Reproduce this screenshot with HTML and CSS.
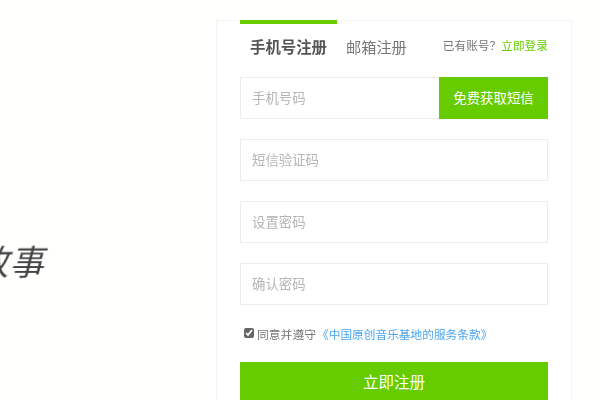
FILE: index.html
```html
<!DOCTYPE html>
<html lang="zh">
<head>
<meta charset="utf-8">
<title>注册</title>
<link rel="stylesheet" href="styles.css">
</head>
<body>
<div class="page">
  <div class="hero"><span class="slogan">故事</span></div>
  <form class="card">
    <div class="tabs">
      <span class="tab tab-active">手机号注册</span>
      <span class="tab">邮箱注册</span>
      <span class="login">已有账号？<a class="login-link">立即登录</a></span>
    </div>
    <div class="field field-code">
      <span class="ph">手机号码</span>
      <span class="send">免费获取短信</span>
    </div>
    <div class="field"><span class="ph">短信验证码</span></div>
    <div class="field"><span class="ph">设置密码</span></div>
    <div class="field"><span class="ph">确认密码</span></div>
    <label class="agree">
      <input class="check" type="checkbox" checked>
      <span>同意并遵守</span>
      <a class="terms">《中国原创音乐基地的服务条款》</a>
    </label>
    <div class="submit">立即注册</div>
  </form>
</div>
</body>
</html>
```

FILE: styles.css
```css
* { box-sizing: border-box; }
html, body { margin: 0; height: 100%; overflow: hidden; background: #fffffd; }
body { font-family: "Noto Sans CJK SC", "Liberation Sans", sans-serif; }
.page { display: flex; width: 600px; height: 400px; padding: 20px 28px 0 0; overflow: hidden; }
.hero { width: 216px; flex: none; padding-top: 216px; overflow: hidden; }
.slogan { display: block; width: 80px; margin-left: -22px; font-size: 34px; line-height: 50px; letter-spacing: 1px; color: #444; font-weight: 400; transform: skewX(-14deg); filter: blur(0.6px); }
.card { flex: 1; height: 400px; padding: 0 23px 0 23px; background: #fff; border: 1px solid #f4f4f4; border-bottom: 0; }
.tabs { position: relative; display: flex; align-items: center; height: 56px; margin-top: -1px; padding-bottom: 9px; }
.tabs::before { content: ""; position: absolute; left: 0; top: 0; width: 97px; height: 4px; background: #66cc00; }
.tab { font-size: 15.2px; color: #777; margin-left: 10px; margin-right: 9px; padding-top: 4px; line-height: 20px; filter: blur(0.4px); }
.tab-active { font-size: 15.4px; font-weight: 700; color: #555; width: 77px; white-space: nowrap; }
.login { margin-left: auto; font-size: 11.7px; color: #777; padding-top: 2px; white-space: nowrap; filter: blur(0.4px); }
.login-link { color: #66cc00; }
.field { display: flex; align-items: center; justify-content: space-between; height: 42px; margin-bottom: 20px; padding-left: 11px; border: 1px solid #ececec; background: #fff; }
.field-code { margin-top: 1px; }
.ph { font-size: 13.4px; color: #b5b5b5; padding-bottom: 2px; filter: blur(0.4px); }
.send { display: flex; align-items: center; justify-content: center; width: 109px; height: 42px; margin: -1px -1px -1px 0; background: #66cc00; color: #fff; font-size: 13.4px; padding-bottom: 2px; }
.agree { display: flex; align-items: center; height: 20px; margin-top: -2px; font-size: 11.8px; color: #777; filter: blur(0.35px); }
.check { width: 10px; height: 10px; margin: 0 3px 0 4px; accent-color: #666; }
.terms { color: #4aa5ee; margin-left: 1px; font-size: 11.7px; }
.submit { display: flex; align-items: center; justify-content: center; height: 40px; margin-top: 19px; padding-bottom: 2px; background: #66cc00; color: #fff; font-size: 15.5px; }
```
